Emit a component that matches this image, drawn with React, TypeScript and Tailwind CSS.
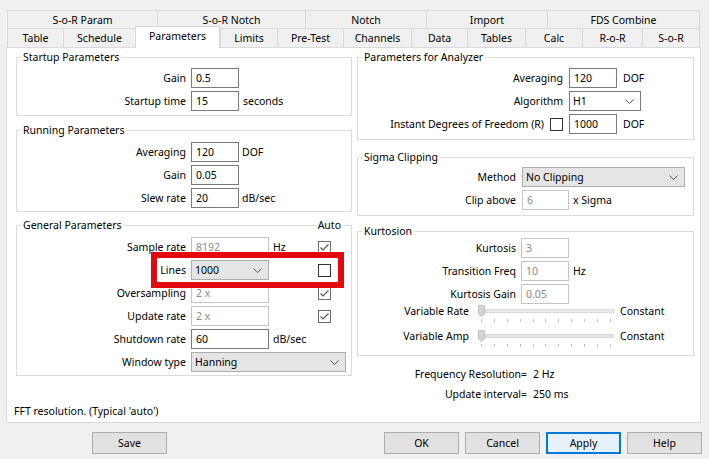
import React from "react";

type BoxProps = { title: string; right?: string; className?: string; children?: React.ReactNode };

const Box = ({ title, right, className, children }: BoxProps) => (
  <div className={`border border-[#dcdcdc] ${className ?? ""}`}>
    <div className="-mt-[8px] h-[14px] flex items-center justify-between leading-[14px]">
      <span className="ml-[4px] px-[2px] bg-white">{title}</span>
      {right ? <span className="mr-[8px] px-[2px] bg-white">{right}</span> : null}
    </div>
    {children}
  </div>
);

const Field = ({ w = "w-[48px]", value, dim = false }: { w?: string; value: string; dim?: boolean }) => (
  <div
    className={`${w} h-[20px] shrink-0 border bg-white pl-[4px] flex items-center ${
      dim ? "border-[#c4c4c4] text-[#8a8a8a]" : "border-[#7a7a7a] text-black"
    }`}
  >
    {value}
  </div>
);

const Chevron = () => (
  <svg width="9" height="5" viewBox="0 0 9 5" className="shrink-0">
    <polyline points="0.5,0.5 4.5,4.5 8.5,0.5" fill="none" stroke="#555555" strokeWidth="1" />
  </svg>
);

const Combo = ({ w, value, white = false }: { w: string; value: string; white?: boolean }) => (
  <div
    className={`${w} h-[20px] shrink-0 border flex items-center justify-between pl-[3px] pr-[6px] ${
      white ? "bg-white border-[#7a7a7a]" : "bg-[#e5e5e5] border-[#adadad]"
    }`}
  >
    <span>{value}</span>
    <Chevron />
  </div>
);

const Check = ({ checked = false, dim = false }: { checked?: boolean; dim?: boolean }) => (
  <div
    className={`w-[13px] h-[13px] shrink-0 border bg-white flex items-center justify-center ${
      dim ? "border-[#6e6e6e]" : "border-[#333333]"
    }`}
  >
    {checked ? (
      <svg width="11" height="11" viewBox="0 0 11 11">
        <path d="M1.5 5.5 L4 8 L9.5 2.5" fill="none" stroke="#5a5a5a" strokeWidth="1.2" />
      </svg>
    ) : null}
  </div>
);

const Slider = ({ label }: { label: string }) => (
  <div className="flex items-start h-[25px]">
    <div className="w-[111px] text-right leading-[14px]">{label}</div>
    <div className="ml-[9px] w-[136px] flex flex-col">
      <div className="h-[14px] flex items-center">
        <svg width="7" height="12" viewBox="0 0 7 12" className="shrink-0">
          <path d="M0.5 0.5 H6.5 V9 L3.5 11.5 L0.5 9 Z" fill="#d4d4d4" stroke="#c2c2c2" strokeWidth="1" />
        </svg>
        <div className="flex-1 h-[4px] bg-[#e7e7e7] border border-[#dadada]" />
      </div>
      <div className="mt-[1px] h-[3px] px-[3px] flex justify-between">
        {Array.from({ length: 11 }).map((_, i) => (
          <div key={i} className="w-px h-[3px] bg-[#c0c0c0]" />
        ))}
      </div>
    </div>
    <div className="ml-[6px] leading-[14px]">Constant</div>
  </div>
);

const row1 = [
  { t: "S-o-R Param", w: "w-[150px]" },
  { t: "S-o-R Notch", w: "w-[148px]" },
  { t: "Notch", w: "w-[121px]" },
  { t: "Import", w: "w-[121px]" },
  { t: "FDS Combine", w: "w-[153px]" },
];

const row2 = [
  { t: "Table", w: "w-[56px]" },
  { t: "Schedule", w: "w-[72px]" },
  { t: "Parameters", w: "w-[85px]", sel: true },
  { t: "Limits", w: "w-[57px]" },
  { t: "Pre-Test", w: "w-[66px]" },
  { t: "Channels", w: "w-[68px]" },
  { t: "Data", w: "w-[56px]" },
  { t: "Tables", w: "w-[58px]" },
  { t: "Calc", w: "w-[57px]" },
  { t: "R-o-R", w: "w-[60px]" },
  { t: "S-o-R", w: "w-[58px]" },
];

const Btn = ({ label, primary = false }: { label: string; primary?: boolean }) => (
  <div
    className={`w-[75px] h-[22px] flex items-center justify-center ${
      primary ? "border-2 border-[#0078d7] bg-[#e5f1fb]" : "border border-[#adadad] bg-[#e1e1e1]"
    }`}
  >
    {label}
  </div>
);

export default function App() {
  return (
    <div className="w-[709px] h-[459px] overflow-hidden bg-[#f0f0f0] text-black pt-[10px] px-[6px] font-['Noto_Sans',sans-serif] text-[10.5px] leading-[14px]">
      {/* Tabs */}
      <div className="ml-[1px] w-[693px]">
        <div className="flex h-[18px]">
          {row1.map((t, i) => (
            <div
              key={t.t}
              className={`${t.w} shrink-0 h-[18px] border-t border-l border-[#d9d9d9] flex items-center justify-center ${
                i === row1.length - 1 ? "border-r" : ""
              }`}
            >
              {t.t}
            </div>
          ))}
        </div>
        <div className="flex h-[19px]">
          {row2.map((t, i) =>
            t.sel ? (
              <div
                key={t.t}
                className={`${t.w} shrink-0 self-start h-[22px] -mt-[2px] relative z-10 bg-white border-t border-l border-r border-[#d9d9d9] flex justify-center pt-[2px]`}
              >
                {t.t}
              </div>
            ) : (
              <div
                key={t.t}
                className={`${t.w} shrink-0 h-[19px] border-t border-l border-[#d9d9d9] flex items-center justify-center ${
                  i === row2.length - 1 ? "border-r" : ""
                }`}
              >
                {t.t}
              </div>
            )
          )}
        </div>
      </div>

      {/* Page */}
      <div className="w-[695px] h-[376px] border border-[#d9d9d9] bg-white pt-[9px] pl-[7px] pr-[6px]">
        <div className="flex gap-[5px] pl-[2px]">
          {/* Left column */}
          <div className="w-[336px] shrink-0">
            <Box title="Startup Parameters">
              <div className="pt-[4px] pb-[4px] flex flex-col gap-[3px]">
                <div className="flex items-center h-[20px]">
                  <div className="w-[169px] text-right">Gain</div>
                  <div className="ml-[5px]">
                    <Field value="0.5" />
                  </div>
                </div>
                <div className="flex items-center h-[20px]">
                  <div className="w-[169px] text-right">Startup time</div>
                  <div className="ml-[5px]">
                    <Field value="15" />
                  </div>
                  <div className="ml-[4px]">seconds</div>
                </div>
              </div>
            </Box>

            <Box title="Running Parameters" className="mt-[14px]">
              <div className="pt-[5px] pb-[3px] flex flex-col gap-[3px]">
                <div className="flex items-center h-[20px]">
                  <div className="w-[169px] text-right">Averaging</div>
                  <div className="ml-[5px]">
                    <Field value="120" />
                  </div>
                  <div className="ml-[3px]">DOF</div>
                </div>
                <div className="flex items-center h-[20px]">
                  <div className="w-[169px] text-right">Gain</div>
                  <div className="ml-[5px]">
                    <Field value="0.05" />
                  </div>
                </div>
                <div className="flex items-center h-[20px]">
                  <div className="w-[169px] text-right">Slew rate</div>
                  <div className="ml-[5px]">
                    <Field value="20" />
                  </div>
                  <div className="ml-[3px]">dB/sec</div>
                </div>
              </div>
            </Box>

            <Box title="General Parameters" right="Auto" className="mt-[13px] relative">
              <div className="pt-[5px] pb-[3px] flex flex-col gap-[3px]">
                <div className="flex items-center h-[20px]">
                  <div className="w-[169px] text-right">Sample rate</div>
                  <div className="ml-[5px]">
                    <Field w="w-[78px]" value="8192" dim />
                  </div>
                  <div className="w-[49px] pl-[4px]">Hz</div>
                  <Check checked dim />
                </div>
                <div className="flex items-center h-[20px]">
                  <div className="w-[169px] text-right">Lines</div>
                  <div className="ml-[5px]">
                    <Combo w="w-[78px]" value="1000" />
                  </div>
                  <div className="w-[49px]" />
                  <Check />
                </div>
                <div className="flex items-center h-[20px]">
                  <div className="w-[169px] text-right">Oversampling</div>
                  <div className="ml-[5px]">
                    <Field w="w-[78px]" value="2 x" dim />
                  </div>
                  <div className="w-[49px]" />
                  <Check checked dim />
                </div>
                <div className="flex items-center h-[20px]">
                  <div className="w-[169px] text-right">Update rate</div>
                  <div className="ml-[5px]">
                    <Field w="w-[78px]" value="2 x" dim />
                  </div>
                  <div className="w-[49px]" />
                  <Check checked dim />
                </div>
                <div className="flex items-center h-[20px]">
                  <div className="w-[169px] text-right">Shutdown rate</div>
                  <div className="ml-[5px]">
                    <Field w="w-[78px]" value="60" />
                  </div>
                  <div className="pl-[4px]">dB/sec</div>
                </div>
                <div className="flex items-center h-[20px]">
                  <div className="w-[169px] text-right">Window type</div>
                  <div className="ml-[5px]">
                    <Combo w="w-[155px]" value="Hanning" />
                  </div>
                </div>
              </div>
              {/* annotation overlay */}
              <div className="absolute left-[134px] top-[26px] w-[193px] h-[36px] border-[6px] border-[#e2080b] pointer-events-none" />
            </Box>
          </div>

          {/* Right column */}
          <div className="w-[337px] shrink-0">
            <Box title="Parameters for Analyzer">
              <div className="pt-[4px] pb-[5px] flex flex-col gap-[3px]">
                <div className="flex items-center h-[20px]">
                  <div className="w-[205px] text-right">Averaging</div>
                  <div className="ml-[6px]">
                    <Field value="120" />
                  </div>
                  <div className="ml-[6px]">DOF</div>
                </div>
                <div className="flex items-center h-[20px]">
                  <div className="w-[205px] text-right">Algorithm</div>
                  <div className="ml-[6px]">
                    <Combo w="w-[72px]" value="H1" white />
                  </div>
                </div>
                <div className="flex items-center h-[20px]">
                  <div className="w-[205px] flex items-center justify-end gap-[6px]">
                    <span>Instant Degrees of Freedom (R)</span>
                    <Check />
                  </div>
                  <div className="ml-[6px]">
                    <Field value="1000" />
                  </div>
                  <div className="ml-[6px]">DOF</div>
                </div>
              </div>
            </Box>

            <Box title="Sigma Clipping" className="mt-[17px]">
              <div className="pt-[3px] pb-[5px] flex flex-col gap-[3px]">
                <div className="flex items-center h-[20px]">
                  <div className="w-[158px] text-right">Method</div>
                  <div className="ml-[6px]">
                    <Combo w="w-[163px]" value="No Clipping" />
                  </div>
                </div>
                <div className="flex items-center h-[20px]">
                  <div className="w-[158px] text-right">Clip above</div>
                  <div className="ml-[6px]">
                    <Field w="w-[47px]" value="6" dim />
                  </div>
                  <div className="ml-[4px]">x Sigma</div>
                </div>
              </div>
            </Box>

            <Box title="Kurtosion" className="mt-[15px]">
              <div className="pb-[1px] flex flex-col">
                <div className="flex flex-col gap-[3px]">
                  <div className="flex items-center h-[20px]">
                    <div className="w-[158px] text-right">Kurtosis</div>
                    <div className="ml-[5px]">
                      <Field value="3" dim />
                    </div>
                  </div>
                  <div className="flex items-center h-[20px]">
                    <div className="w-[158px] text-right">Transition Freq</div>
                    <div className="ml-[5px]">
                      <Field value="10" dim />
                    </div>
                    <div className="ml-[4px]">Hz</div>
                  </div>
                  <div className="flex items-center h-[20px]">
                    <div className="w-[158px] text-right">Kurtosis Gain</div>
                    <div className="ml-[5px]">
                      <Field value="0.05" dim />
                    </div>
                  </div>
                </div>
                <Slider label="Variable Rate" />
                <Slider label="Variable Amp" />
              </div>
            </Box>

            <div className="mt-[11px] flex flex-col gap-[6px]">
              <div className="flex h-[14px]">
                <div className="w-[170px] text-right">Frequency Resolution=</div>
                <div className="ml-[6px]">2 Hz</div>
              </div>
              <div className="flex h-[14px]">
                <div className="w-[170px] text-right">Update interval=</div>
                <div className="ml-[6px]">250 ms</div>
              </div>
            </div>
          </div>
        </div>

        <div className="mt-[3px] h-[14px]">FFT resolution. (Typical 'auto')</div>
      </div>

      {/* Buttons */}
      <div className="mt-[9px] flex h-[22px]">
        <div className="ml-[86px]">
          <Btn label="Save" />
        </div>
        <div className="ml-auto mr-[1px] flex gap-[6px]">
          <Btn label="OK" />
          <Btn label="Cancel" />
          <Btn label="Apply" primary />
          <Btn label="Help" />
        </div>
      </div>
    </div>
  );
}
